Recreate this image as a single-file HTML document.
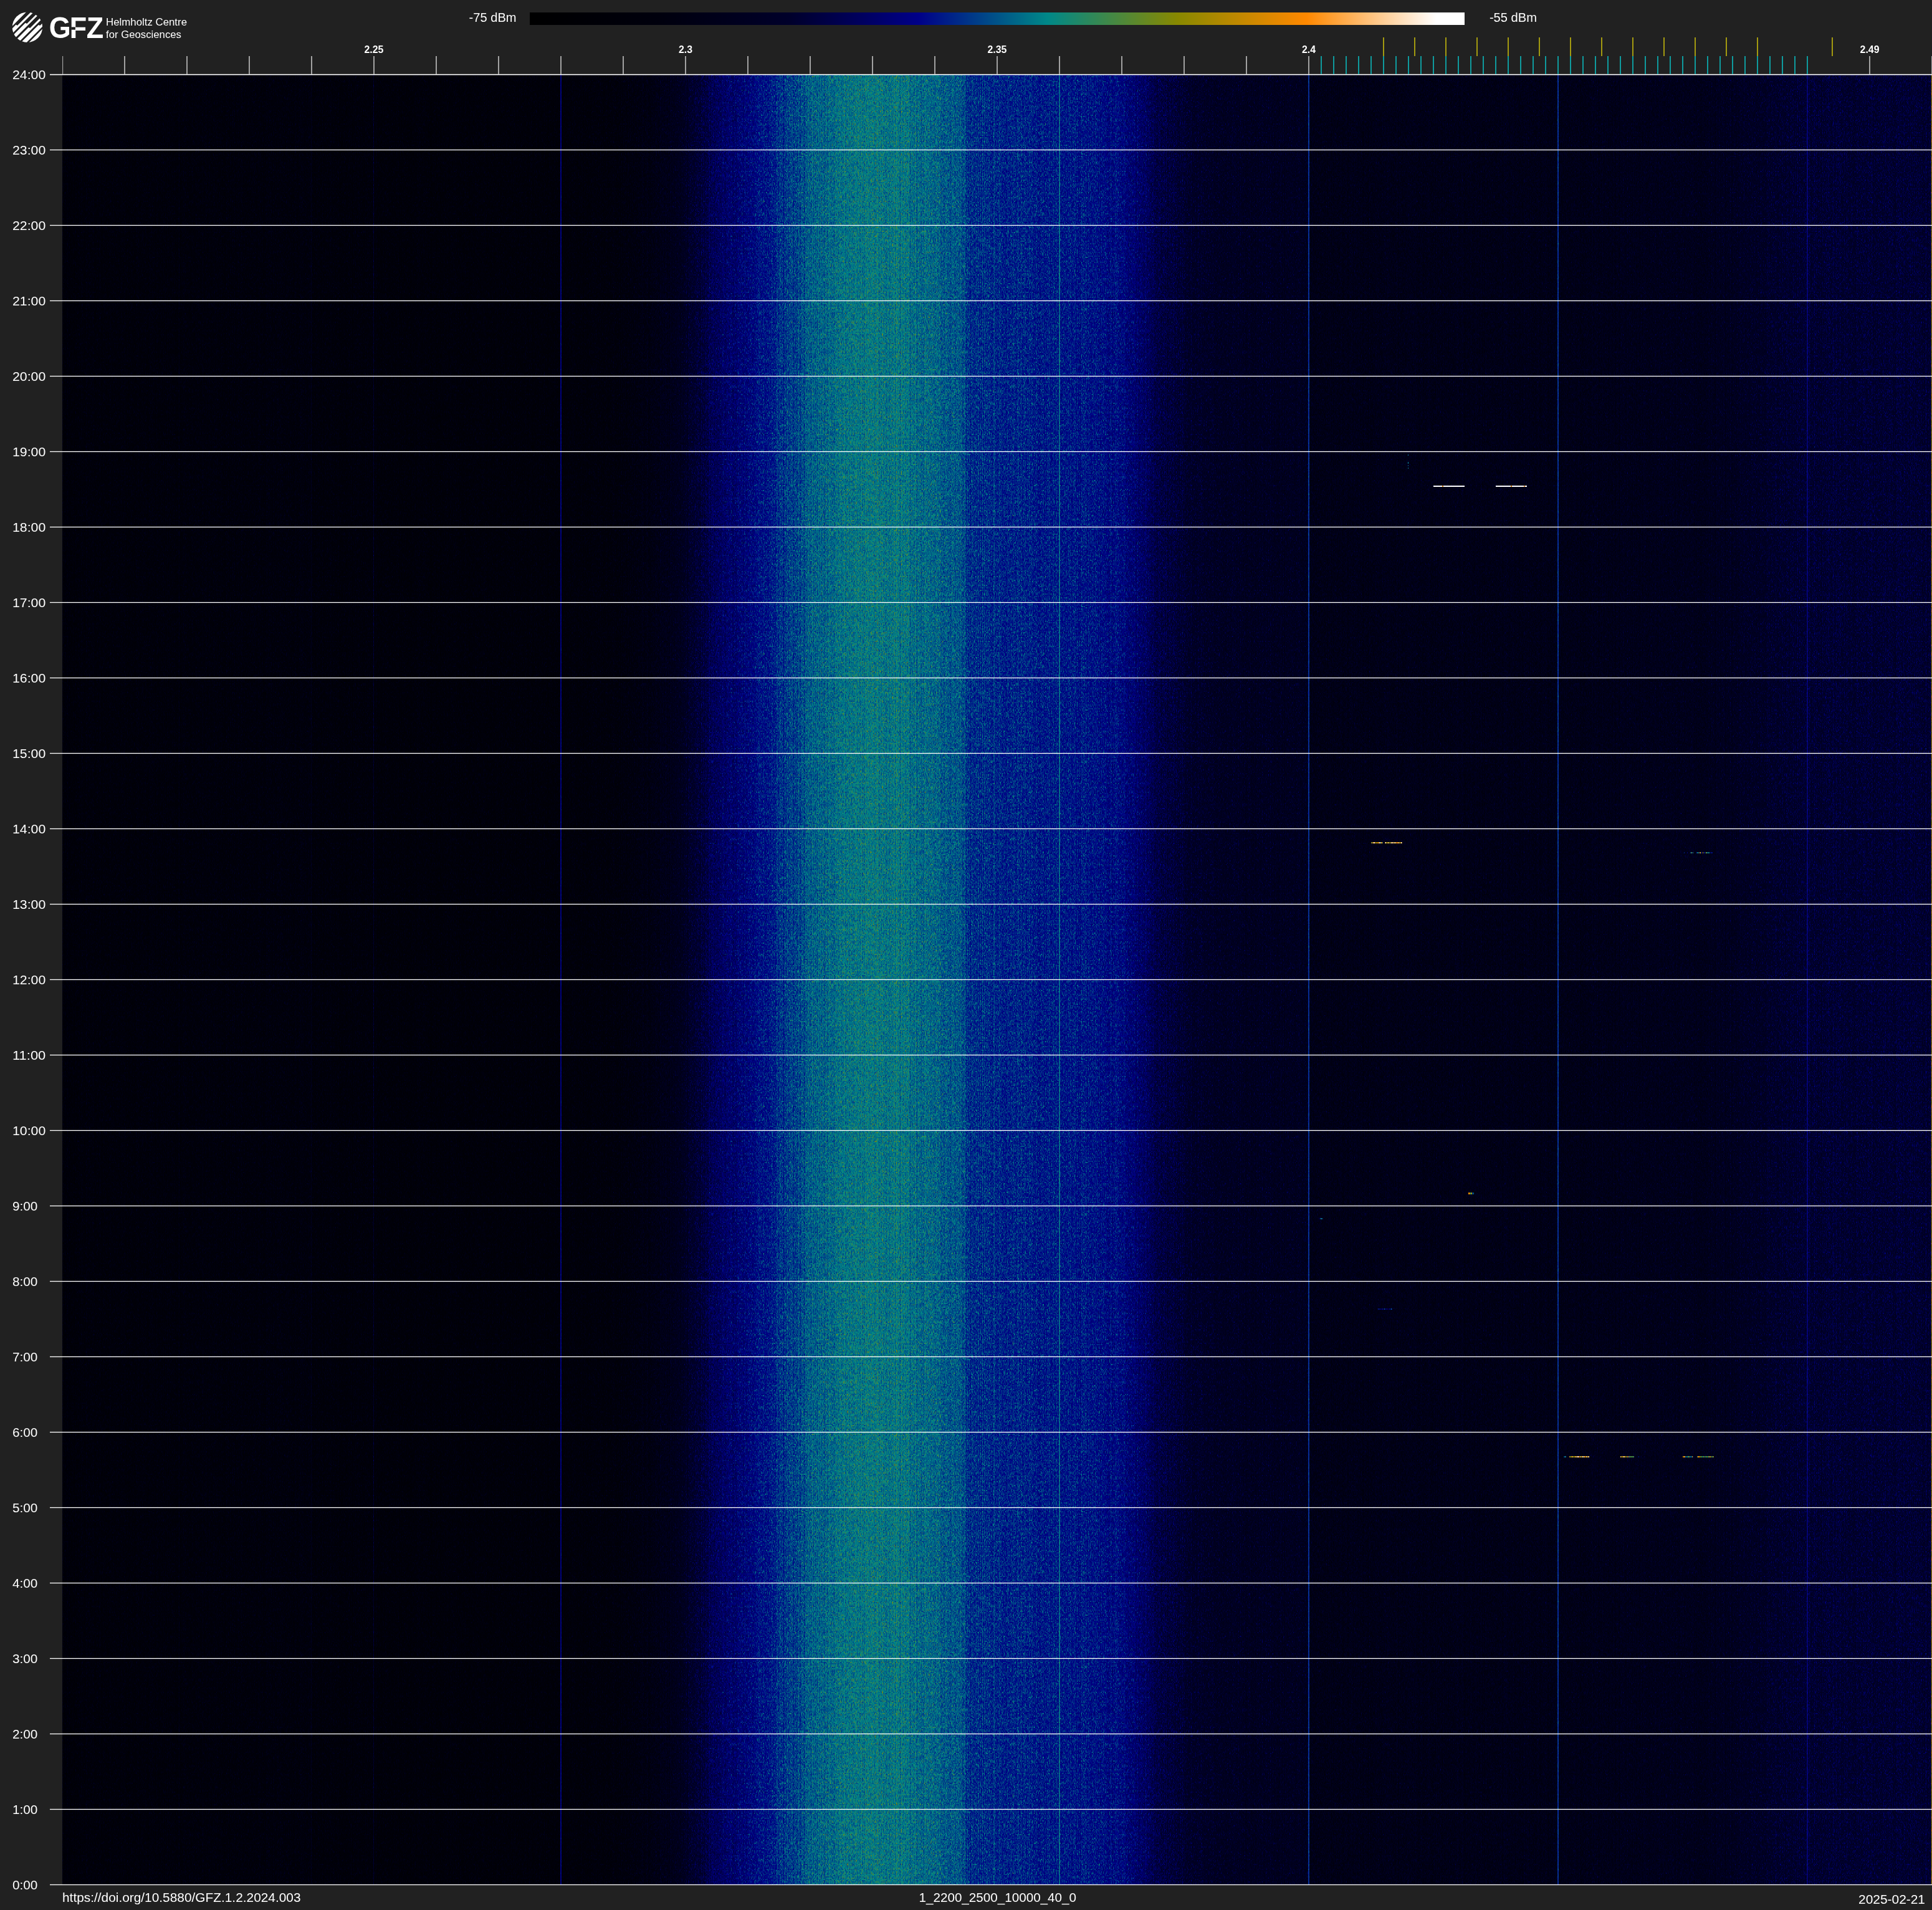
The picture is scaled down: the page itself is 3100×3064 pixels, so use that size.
<!DOCTYPE html>
<html lang="en"><head><meta charset="utf-8"><title>GFZ spectrogram 1_2200_2500_10000_40_0 2025-02-21</title>
<style>html,body{margin:0;padding:0;background:#212121;}body{width:3100px;height:3064px;overflow:hidden;}svg{display:block;will-change:transform;}text{font-family:"Liberation Sans",sans-serif;fill:#fff;}</style></head>
<body>
<svg width="3100" height="3064" viewBox="0 0 3100 3064">
<defs>
<linearGradient id="lvl" x1="0" y1="0" x2="1" y2="0"><stop offset="0.00000" stop-color="rgb(26,26,26)"/><stop offset="0.01667" stop-color="rgb(28,28,28)"/><stop offset="0.13300" stop-color="rgb(32,32,32)"/><stop offset="0.13300" stop-color="rgb(56,56,56)"/><stop offset="0.13333" stop-color="rgb(56,56,56)"/><stop offset="0.13333" stop-color="rgb(29,29,29)"/><stop offset="0.16633" stop-color="rgb(29,29,29)"/><stop offset="0.16633" stop-color="rgb(71,71,71)"/><stop offset="0.16667" stop-color="rgb(71,71,71)"/><stop offset="0.16667" stop-color="rgb(27,27,27)"/><stop offset="0.26633" stop-color="rgb(27,27,27)"/><stop offset="0.26633" stop-color="rgb(103,103,103)"/><stop offset="0.26700" stop-color="rgb(103,103,103)"/><stop offset="0.26700" stop-color="rgb(27,27,27)"/><stop offset="0.29333" stop-color="rgb(31,31,31)"/><stop offset="0.31333" stop-color="rgb(41,41,41)"/><stop offset="0.32667" stop-color="rgb(52,52,52)"/><stop offset="0.33333" stop-color="rgb(61,61,61)"/><stop offset="0.34000" stop-color="rgb(73,73,73)"/><stop offset="0.34667" stop-color="rgb(84,84,84)"/><stop offset="0.35333" stop-color="rgb(92,92,92)"/><stop offset="0.36167" stop-color="rgb(98,98,98)"/><stop offset="0.37000" stop-color="rgb(105,105,105)"/><stop offset="0.37833" stop-color="rgb(113,113,113)"/><stop offset="0.38667" stop-color="rgb(120,120,120)"/><stop offset="0.40333" stop-color="rgb(132,132,132)"/><stop offset="0.42000" stop-color="rgb(138,138,138)"/><stop offset="0.43333" stop-color="rgb(140,140,140)"/><stop offset="0.44667" stop-color="rgb(139,139,139)"/><stop offset="0.46667" stop-color="rgb(133,133,133)"/><stop offset="0.48300" stop-color="rgb(127,127,127)"/><stop offset="0.48300" stop-color="rgb(118,118,118)"/><stop offset="0.50000" stop-color="rgb(117,117,117)"/><stop offset="0.50000" stop-color="rgb(115,115,115)"/><stop offset="0.51667" stop-color="rgb(114,114,114)"/><stop offset="0.53300" stop-color="rgb(112,112,112)"/><stop offset="0.53300" stop-color="rgb(133,133,133)"/><stop offset="0.53367" stop-color="rgb(133,133,133)"/><stop offset="0.53367" stop-color="rgb(112,112,112)"/><stop offset="0.55000" stop-color="rgb(110,110,110)"/><stop offset="0.56667" stop-color="rgb(105,105,105)"/><stop offset="0.57500" stop-color="rgb(96,96,96)"/><stop offset="0.58333" stop-color="rgb(85,85,85)"/><stop offset="0.59167" stop-color="rgb(77,77,77)"/><stop offset="0.60000" stop-color="rgb(72,72,72)"/><stop offset="0.60000" stop-color="rgb(69,69,69)"/><stop offset="0.61667" stop-color="rgb(62,62,62)"/><stop offset="0.63333" stop-color="rgb(59,59,59)"/><stop offset="0.66633" stop-color="rgb(57,57,57)"/><stop offset="0.66633" stop-color="rgb(113,113,113)"/><stop offset="0.66700" stop-color="rgb(113,113,113)"/><stop offset="0.66700" stop-color="rgb(48,48,48)"/><stop offset="0.79967" stop-color="rgb(48,48,48)"/><stop offset="0.79967" stop-color="rgb(113,113,113)"/><stop offset="0.80033" stop-color="rgb(113,113,113)"/><stop offset="0.80033" stop-color="rgb(48,48,48)"/><stop offset="0.88333" stop-color="rgb(54,54,54)"/><stop offset="0.91667" stop-color="rgb(68,68,68)"/><stop offset="0.93300" stop-color="rgb(72,72,72)"/><stop offset="0.93300" stop-color="rgb(96,96,96)"/><stop offset="0.93367" stop-color="rgb(96,96,96)"/><stop offset="0.93367" stop-color="rgb(72,72,72)"/><stop offset="0.99967" stop-color="rgb(72,72,72)"/><stop offset="0.99967" stop-color="rgb(189,189,189)"/><stop offset="1.00000" stop-color="rgb(189,189,189)"/></linearGradient>
<linearGradient id="cbar" x1="0" y1="0" x2="1" y2="0"><stop offset="0.000" stop-color="#000000"/><stop offset="0.139" stop-color="#00000d"/><stop offset="0.277" stop-color="#00002a"/><stop offset="0.416" stop-color="#000088"/><stop offset="0.554" stop-color="#008888"/><stop offset="0.693" stop-color="#888800"/><stop offset="0.831" stop-color="#ff8800"/><stop offset="0.970" stop-color="#ffffff"/><stop offset="1.000" stop-color="#ffffff"/></linearGradient>
<filter id="spec" filterUnits="userSpaceOnUse" primitiveUnits="userSpaceOnUse" x="0" y="0" width="3000" height="726" color-interpolation-filters="sRGB"><feTurbulence type="fractalNoise" baseFrequency="1.71 0.855" numOctaves="1" seed="7" result="n"/><feColorMatrix in="n" type="matrix" values="0 0 0 1 0  0 0 0 1 0  0 0 0 1 0  0 0 0 0 1" result="ng"/><feFlood flood-color="#fff" x="0" y="0" width="3000" height="1" result="r1"/><feOffset in="r1" dx="0" dy="0" x="0" y="0" width="3000" height="2" result="t2"/><feTile in="t2" result="mask"/><feComposite in="ng" in2="mask" operator="in" result="even"/><feOffset in="even" dx="0" dy="1" result="odd"/><feMerge result="n2"><feMergeNode in="even"/><feMergeNode in="odd"/></feMerge><feComponentTransfer in="n2" result="nk"><feFuncR type="gamma" exponent="2.5"/><feFuncG type="gamma" exponent="2.5"/><feFuncB type="gamma" exponent="2.5"/></feComponentTransfer><feTurbulence type="fractalNoise" baseFrequency="1.37 0.00002" numOctaves="1" seed="11" x="0" y="0" width="3000" height="4" result="c0"/><feTile in="c0" result="c"/><feColorMatrix in="c" type="matrix" values="0 0 0 1 0  0 0 0 1 0  0 0 0 1 0  0 0 0 0 1" result="cg"/><feComposite in="SourceGraphic" in2="cg" operator="arithmetic" k1="0" k2="1" k3="0.1423" k4="-0.0712" result="lv"/><feComposite in="lv" in2="nk" operator="arithmetic" k1="0" k2="1" k3="0.3300" k4="-0.0636" result="s"/><feComponentTransfer in="s"><feFuncR type="table" tableValues="0.0000 0.0000 0.0000 0.0000 0.0000 0.0000 0.0000 0.0000 0.0000 0.0000 0.0000 0.0000 0.0000 0.0000 0.0000 0.0000 0.0000 0.0000 0.0000 0.0000 0.0000 0.0000 0.0000 0.0000 0.0000 0.0000 0.0000 0.0000 0.0000 0.0000 0.0000 0.0000 0.0000 0.0000 0.0000 0.0000 0.0000 0.0000 0.0000 0.0000 0.0000 0.0000 0.0000 0.0000 0.0000 0.0000 0.0000 0.0000 0.0000 0.0000 0.0000 0.0000 0.0000 0.0000 0.0000 0.0000 0.0230 0.0614 0.0998 0.1381 0.1765 0.2149 0.2532 0.2916 0.3300 0.3683 0.4067 0.4451 0.4835 0.5218 0.5570 0.5908 0.6246 0.6585 0.6923 0.7261 0.7599 0.7937 0.8275 0.8614 0.8952 0.9290 0.9628 0.9966 1.0000 1.0000 1.0000 1.0000 1.0000 1.0000 1.0000 1.0000 1.0000 1.0000 1.0000 1.0000 1.0000 1.0000 1.0000 1.0000 1.0000"/><feFuncG type="table" tableValues="0.0000 0.0000 0.0000 0.0000 0.0000 0.0000 0.0000 0.0000 0.0000 0.0000 0.0000 0.0000 0.0000 0.0000 0.0000 0.0000 0.0000 0.0000 0.0000 0.0000 0.0000 0.0000 0.0000 0.0000 0.0000 0.0000 0.0000 0.0000 0.0000 0.0000 0.0000 0.0000 0.0000 0.0000 0.0000 0.0000 0.0000 0.0000 0.0000 0.0000 0.0000 0.0000 0.0155 0.0541 0.0928 0.1314 0.1700 0.2087 0.2473 0.2860 0.3246 0.3633 0.4019 0.4406 0.4792 0.5179 0.5333 0.5333 0.5333 0.5333 0.5333 0.5333 0.5333 0.5333 0.5333 0.5333 0.5333 0.5333 0.5333 0.5333 0.5333 0.5333 0.5333 0.5333 0.5333 0.5333 0.5333 0.5333 0.5333 0.5333 0.5333 0.5333 0.5333 0.5333 0.5635 0.5971 0.6307 0.6643 0.6978 0.7314 0.7650 0.7986 0.8321 0.8657 0.8993 0.9329 0.9664 1.0000 1.0000 1.0000 1.0000"/><feFuncB type="table" tableValues="0.0000 0.0037 0.0073 0.0110 0.0147 0.0183 0.0220 0.0257 0.0293 0.0330 0.0367 0.0403 0.0440 0.0477 0.0518 0.0600 0.0683 0.0765 0.0848 0.0930 0.1013 0.1095 0.1177 0.1260 0.1342 0.1425 0.1507 0.1589 0.1727 0.1992 0.2257 0.2522 0.2787 0.3053 0.3318 0.3583 0.3848 0.4113 0.4379 0.4644 0.4909 0.5174 0.5333 0.5333 0.5333 0.5333 0.5333 0.5333 0.5333 0.5333 0.5333 0.5333 0.5333 0.5333 0.5333 0.5333 0.5103 0.4719 0.4336 0.3952 0.3568 0.3185 0.2801 0.2417 0.2034 0.1650 0.1266 0.0882 0.0499 0.0115 0.0000 0.0000 0.0000 0.0000 0.0000 0.0000 0.0000 0.0000 0.0000 0.0000 0.0000 0.0000 0.0000 0.0000 0.0647 0.1367 0.2086 0.2806 0.3525 0.4245 0.4964 0.5683 0.6403 0.7122 0.7842 0.8561 0.9281 1.0000 1.0000 1.0000 1.0000"/></feComponentTransfer></filter>
<filter id="sig" x="0" y="0" width="1" height="1" color-interpolation-filters="sRGB"><feTurbulence type="fractalNoise" baseFrequency="1.71 0.01" numOctaves="1" seed="5" result="n"/><feColorMatrix in="n" type="matrix" values="0 0 0 1 0  0 0 0 1 0  0 0 0 1 0  0 0 0 0 1" result="ng"/><feComposite in="SourceGraphic" in2="ng" operator="arithmetic" k1="0" k2="1" k3="0.9" k4="-0.45" result="s"/><feComponentTransfer in="s"><feFuncR type="table" tableValues="0.0000 0.0000 0.0000 0.0000 0.0000 0.0000 0.0000 0.0000 0.0000 0.0000 0.0000 0.0000 0.0000 0.0000 0.0000 0.0000 0.0000 0.0000 0.0000 0.0000 0.0000 0.0000 0.0000 0.0000 0.0000 0.0000 0.0000 0.0000 0.0000 0.0000 0.0000 0.0000 0.0000 0.0000 0.0000 0.0000 0.0000 0.0000 0.0000 0.0000 0.0000 0.0000 0.0000 0.0000 0.0000 0.0000 0.0000 0.0000 0.0000 0.0000 0.0000 0.0000 0.0000 0.0000 0.0000 0.0000 0.0230 0.0614 0.0998 0.1381 0.1765 0.2149 0.2532 0.2916 0.3300 0.3683 0.4067 0.4451 0.4835 0.5218 0.5570 0.5908 0.6246 0.6585 0.6923 0.7261 0.7599 0.7937 0.8275 0.8614 0.8952 0.9290 0.9628 0.9966 1.0000 1.0000 1.0000 1.0000 1.0000 1.0000 1.0000 1.0000 1.0000 1.0000 1.0000 1.0000 1.0000 1.0000 1.0000 1.0000 1.0000"/><feFuncG type="table" tableValues="0.0000 0.0000 0.0000 0.0000 0.0000 0.0000 0.0000 0.0000 0.0000 0.0000 0.0000 0.0000 0.0000 0.0000 0.0000 0.0000 0.0000 0.0000 0.0000 0.0000 0.0000 0.0000 0.0000 0.0000 0.0000 0.0000 0.0000 0.0000 0.0000 0.0000 0.0000 0.0000 0.0000 0.0000 0.0000 0.0000 0.0000 0.0000 0.0000 0.0000 0.0000 0.0000 0.0155 0.0541 0.0928 0.1314 0.1700 0.2087 0.2473 0.2860 0.3246 0.3633 0.4019 0.4406 0.4792 0.5179 0.5333 0.5333 0.5333 0.5333 0.5333 0.5333 0.5333 0.5333 0.5333 0.5333 0.5333 0.5333 0.5333 0.5333 0.5333 0.5333 0.5333 0.5333 0.5333 0.5333 0.5333 0.5333 0.5333 0.5333 0.5333 0.5333 0.5333 0.5333 0.5635 0.5971 0.6307 0.6643 0.6978 0.7314 0.7650 0.7986 0.8321 0.8657 0.8993 0.9329 0.9664 1.0000 1.0000 1.0000 1.0000"/><feFuncB type="table" tableValues="0.0000 0.0037 0.0073 0.0110 0.0147 0.0183 0.0220 0.0257 0.0293 0.0330 0.0367 0.0403 0.0440 0.0477 0.0518 0.0600 0.0683 0.0765 0.0848 0.0930 0.1013 0.1095 0.1177 0.1260 0.1342 0.1425 0.1507 0.1589 0.1727 0.1992 0.2257 0.2522 0.2787 0.3053 0.3318 0.3583 0.3848 0.4113 0.4379 0.4644 0.4909 0.5174 0.5333 0.5333 0.5333 0.5333 0.5333 0.5333 0.5333 0.5333 0.5333 0.5333 0.5333 0.5333 0.5333 0.5333 0.5103 0.4719 0.4336 0.3952 0.3568 0.3185 0.2801 0.2417 0.2034 0.1650 0.1266 0.0882 0.0499 0.0115 0.0000 0.0000 0.0000 0.0000 0.0000 0.0000 0.0000 0.0000 0.0000 0.0000 0.0000 0.0000 0.0000 0.0000 0.0647 0.1367 0.2086 0.2806 0.3525 0.4245 0.4964 0.5683 0.6403 0.7122 0.7842 0.8561 0.9281 1.0000 1.0000 1.0000 1.0000"/></feComponentTransfer></filter>
<pattern id="specpat" patternUnits="userSpaceOnUse" x="100" y="120" width="3000" height="726"><rect x="0" y="0" width="3000" height="726" fill="url(#lvl)" filter="url(#spec)"/></pattern>
<linearGradient id="lvlc" x1="0" y1="0" x2="1" y2="0"><stop offset="0.00000" stop-color="#000009"/><stop offset="0.01667" stop-color="#00000a"/><stop offset="0.13300" stop-color="#00000c"/><stop offset="0.13300" stop-color="#00001e"/><stop offset="0.13333" stop-color="#00001e"/><stop offset="0.13333" stop-color="#00000b"/><stop offset="0.16633" stop-color="#00000b"/><stop offset="0.16633" stop-color="#00002c"/><stop offset="0.16667" stop-color="#00002c"/><stop offset="0.16667" stop-color="#00000a"/><stop offset="0.26633" stop-color="#00000a"/><stop offset="0.26633" stop-color="#000081"/><stop offset="0.26700" stop-color="#000081"/><stop offset="0.26700" stop-color="#00000a"/><stop offset="0.29333" stop-color="#00000b"/><stop offset="0.31333" stop-color="#000011"/><stop offset="0.32667" stop-color="#00001b"/><stop offset="0.33333" stop-color="#000022"/><stop offset="0.34000" stop-color="#00002f"/><stop offset="0.34667" stop-color="#00004c"/><stop offset="0.35333" stop-color="#000062"/><stop offset="0.36167" stop-color="#000073"/><stop offset="0.37000" stop-color="#000085"/><stop offset="0.37833" stop-color="#001a88"/><stop offset="0.38667" stop-color="#003788"/><stop offset="0.40333" stop-color="#006588"/><stop offset="0.42000" stop-color="#007c88"/><stop offset="0.43333" stop-color="#008288"/><stop offset="0.44667" stop-color="#007e88"/><stop offset="0.46667" stop-color="#006888"/><stop offset="0.48300" stop-color="#005188"/><stop offset="0.48300" stop-color="#002c88"/><stop offset="0.50000" stop-color="#002888"/><stop offset="0.50000" stop-color="#002288"/><stop offset="0.51667" stop-color="#001e88"/><stop offset="0.53300" stop-color="#001988"/><stop offset="0.53300" stop-color="#006688"/><stop offset="0.53367" stop-color="#006688"/><stop offset="0.53367" stop-color="#001888"/><stop offset="0.55000" stop-color="#000e88"/><stop offset="0.56667" stop-color="#000085"/><stop offset="0.57500" stop-color="#00006c"/><stop offset="0.58333" stop-color="#00004f"/><stop offset="0.59167" stop-color="#00003b"/><stop offset="0.60000" stop-color="#00002d"/><stop offset="0.60000" stop-color="#000029"/><stop offset="0.61667" stop-color="#000023"/><stop offset="0.63333" stop-color="#000021"/><stop offset="0.66633" stop-color="#00001f"/><stop offset="0.66633" stop-color="#001d88"/><stop offset="0.66700" stop-color="#001d88"/><stop offset="0.66700" stop-color="#000017"/><stop offset="0.79967" stop-color="#000018"/><stop offset="0.79967" stop-color="#001d88"/><stop offset="0.80033" stop-color="#001d88"/><stop offset="0.80033" stop-color="#000018"/><stop offset="0.88333" stop-color="#00001c"/><stop offset="0.91667" stop-color="#000027"/><stop offset="0.93300" stop-color="#00002d"/><stop offset="0.93300" stop-color="#00006c"/><stop offset="0.93367" stop-color="#00006c"/><stop offset="0.93367" stop-color="#00002f"/><stop offset="0.99967" stop-color="#00002d"/><stop offset="0.99967" stop-color="#b18800"/><stop offset="1.00000" stop-color="#b18800"/></linearGradient>
<clipPath id="logoclip"><circle cx="43.9" cy="43.7" r="24.25"/></clipPath>
</defs>
<rect x="0" y="0" width="3100" height="3064" fill="#212121"/>
<rect x="100" y="120" width="3000" height="2904" fill="url(#lvlc)"/>
<rect x="100" y="120" width="3000" height="2904" fill="url(#specpat)"/>
<rect x="899" y="120" width="2" height="2904" fill="#00007c" opacity="0.7"/>
<rect x="1699" y="120" width="2" height="2904" fill="#0a6a94" opacity="0.35"/>
<rect x="2099" y="120" width="2" height="2904" fill="#0c44a0" opacity="0.55"/>
<rect x="2499" y="120" width="2" height="2904" fill="#0c44a0" opacity="0.55"/>
<rect x="2899" y="120" width="2" height="2904" fill="#08088a" opacity="0.4"/>
<g shape-rendering="crispEdges">
<rect x="2300" y="779" width="50" height="2" fill="#fff"/><rect x="2400" y="779" width="50" height="2" fill="#fff"/><rect x="2314" y="779" width="2" height="2" fill="#e08a10"/><rect x="2424" y="779" width="2" height="2" fill="#e08a10"/><rect x="2445" y="779" width="2" height="2" fill="#f0a040"/><rect x="2259" y="729" width="1" height="2" fill="#0a6a9a"/><rect x="2259" y="741" width="1" height="3" fill="#0a8a9a"/><rect x="2259" y="746" width="1" height="2" fill="#0a4a9a"/><rect x="2259" y="750" width="1" height="2" fill="#0a6a9a"/><linearGradient id="sg2200_1351" x1="0" y1="0" x2="1" y2="0"><stop offset="0" stop-color="rgb(189,189,189)"/><stop offset="1" stop-color="rgb(204,204,204)"/></linearGradient><rect x="2200" y="1351" width="19" height="2" fill="url(#sg2200_1351)" filter="url(#sig)"/><linearGradient id="sg2222_1351" x1="0" y1="0" x2="1" y2="0"><stop offset="0" stop-color="rgb(209,209,209)"/><stop offset="1" stop-color="rgb(194,194,194)"/></linearGradient><rect x="2222" y="1351" width="28" height="2" fill="url(#sg2222_1351)" filter="url(#sig)"/><linearGradient id="sg2702_1367" x1="0" y1="0" x2="1" y2="0"><stop offset="0" stop-color="rgb(117,117,117)"/><stop offset="1" stop-color="rgb(117,117,117)"/></linearGradient><rect x="2702" y="1367" width="1" height="2" fill="url(#sg2702_1367)" filter="url(#sig)"/><linearGradient id="sg2707_1367" x1="0" y1="0" x2="1" y2="0"><stop offset="0" stop-color="rgb(140,140,140)"/><stop offset="1" stop-color="rgb(140,140,140)"/></linearGradient><rect x="2707" y="1367" width="1" height="2" fill="url(#sg2707_1367)" filter="url(#sig)"/><linearGradient id="sg2712_1367" x1="0" y1="0" x2="1" y2="0"><stop offset="0" stop-color="rgb(120,120,120)"/><stop offset="1" stop-color="rgb(120,120,120)"/></linearGradient><rect x="2712" y="1367" width="5" height="2" fill="url(#sg2712_1367)" filter="url(#sig)"/><linearGradient id="sg2722_1367" x1="0" y1="0" x2="1" y2="0"><stop offset="0" stop-color="rgb(128,128,128)"/><stop offset="1" stop-color="rgb(112,112,112)"/></linearGradient><rect x="2722" y="1367" width="26" height="2" fill="url(#sg2722_1367)" filter="url(#sig)"/><rect x="2727" y="1367" width="2" height="2" fill="#c0a010"/><rect x="2732" y="1367" width="1" height="2" fill="#c0a010"/><rect x="2737" y="1367" width="1" height="2" fill="#90a020"/><linearGradient id="sg2356_1913" x1="0" y1="0" x2="1" y2="0"><stop offset="0" stop-color="rgb(204,204,204)"/><stop offset="1" stop-color="rgb(143,143,143)"/></linearGradient><rect x="2356" y="1913" width="9" height="3" fill="url(#sg2356_1913)" filter="url(#sig)"/><linearGradient id="sg2118_1954" x1="0" y1="0" x2="1" y2="0"><stop offset="0" stop-color="rgb(128,128,128)"/><stop offset="1" stop-color="rgb(128,128,128)"/></linearGradient><rect x="2118" y="1954" width="5" height="2" fill="url(#sg2118_1954)" filter="url(#sig)"/><linearGradient id="sg2210_2099" x1="0" y1="0" x2="1" y2="0"><stop offset="0" stop-color="rgb(92,92,92)"/><stop offset="1" stop-color="rgb(92,92,92)"/></linearGradient><rect x="2210" y="2099" width="24" height="2" fill="url(#sg2210_2099)" filter="url(#sig)"/><linearGradient id="sg2509_2336" x1="0" y1="0" x2="1" y2="0"><stop offset="0" stop-color="rgb(128,128,128)"/><stop offset="1" stop-color="rgb(128,128,128)"/></linearGradient><rect x="2509" y="2336" width="4" height="2" fill="url(#sg2509_2336)" filter="url(#sig)"/><linearGradient id="sg2518_2336" x1="0" y1="0" x2="1" y2="0"><stop offset="0" stop-color="rgb(184,184,184)"/><stop offset="1" stop-color="rgb(235,235,235)"/></linearGradient><rect x="2518" y="2336" width="32" height="2" fill="url(#sg2518_2336)" filter="url(#sig)"/><linearGradient id="sg2600_2336" x1="0" y1="0" x2="1" y2="0"><stop offset="0" stop-color="rgb(230,230,230)"/><stop offset="1" stop-color="rgb(138,138,138)"/></linearGradient><rect x="2600" y="2336" width="22" height="2" fill="url(#sg2600_2336)" filter="url(#sig)"/><linearGradient id="sg2629_2336" x1="0" y1="0" x2="1" y2="0"><stop offset="0" stop-color="rgb(117,117,117)"/><stop offset="1" stop-color="rgb(117,117,117)"/></linearGradient><rect x="2629" y="2336" width="1" height="2" fill="url(#sg2629_2336)" filter="url(#sig)"/><linearGradient id="sg2632_2336" x1="0" y1="0" x2="1" y2="0"><stop offset="0" stop-color="rgb(117,117,117)"/><stop offset="1" stop-color="rgb(117,117,117)"/></linearGradient><rect x="2632" y="2336" width="1" height="2" fill="url(#sg2632_2336)" filter="url(#sig)"/><linearGradient id="sg2700_2336" x1="0" y1="0" x2="1" y2="0"><stop offset="0" stop-color="rgb(173,173,173)"/><stop offset="1" stop-color="rgb(158,158,158)"/></linearGradient><rect x="2700" y="2336" width="17" height="2" fill="url(#sg2700_2336)" filter="url(#sig)"/><linearGradient id="sg2723_2336" x1="0" y1="0" x2="1" y2="0"><stop offset="0" stop-color="rgb(189,189,189)"/><stop offset="1" stop-color="rgb(138,138,138)"/></linearGradient><rect x="2723" y="2336" width="27" height="2" fill="url(#sg2723_2336)" filter="url(#sig)"/></g>
<rect x="80" y="118.85" width="3020" height="1.6" fill="#fff"/><text x="20" y="127.0" font-size="20" textLength="53.3" lengthAdjust="spacingAndGlyphs">24:00</text>
<rect x="80" y="239.85" width="3020" height="1.3" fill="#fff"/><text x="20" y="248.0" font-size="20" textLength="53.3" lengthAdjust="spacingAndGlyphs">23:00</text>
<rect x="80" y="360.85" width="3020" height="1.3" fill="#fff"/><text x="20" y="369.1" font-size="20" textLength="53.3" lengthAdjust="spacingAndGlyphs">22:00</text>
<rect x="80" y="481.85" width="3020" height="1.3" fill="#fff"/><text x="20" y="490.1" font-size="20" textLength="53.3" lengthAdjust="spacingAndGlyphs">21:00</text>
<rect x="80" y="602.85" width="3020" height="1.3" fill="#fff"/><text x="20" y="611.1" font-size="20" textLength="53.3" lengthAdjust="spacingAndGlyphs">20:00</text>
<rect x="80" y="723.85" width="3020" height="1.3" fill="#fff"/><text x="20" y="732.1" font-size="20" textLength="53.3" lengthAdjust="spacingAndGlyphs">19:00</text>
<rect x="80" y="844.85" width="3020" height="1.3" fill="#fff"/><text x="20" y="853.1" font-size="20" textLength="53.3" lengthAdjust="spacingAndGlyphs">18:00</text>
<rect x="80" y="965.85" width="3020" height="1.3" fill="#fff"/><text x="20" y="974.1" font-size="20" textLength="53.3" lengthAdjust="spacingAndGlyphs">17:00</text>
<rect x="80" y="1086.85" width="3020" height="1.3" fill="#fff"/><text x="20" y="1095.0" font-size="20" textLength="53.3" lengthAdjust="spacingAndGlyphs">16:00</text>
<rect x="80" y="1207.85" width="3020" height="1.3" fill="#fff"/><text x="20" y="1216.0" font-size="20" textLength="53.3" lengthAdjust="spacingAndGlyphs">15:00</text>
<rect x="80" y="1328.85" width="3020" height="1.3" fill="#fff"/><text x="20" y="1337.0" font-size="20" textLength="53.3" lengthAdjust="spacingAndGlyphs">14:00</text>
<rect x="80" y="1449.85" width="3020" height="1.3" fill="#fff"/><text x="20" y="1458.0" font-size="20" textLength="53.3" lengthAdjust="spacingAndGlyphs">13:00</text>
<rect x="80" y="1570.85" width="3020" height="1.3" fill="#fff"/><text x="20" y="1579.0" font-size="20" textLength="53.3" lengthAdjust="spacingAndGlyphs">12:00</text>
<rect x="80" y="1691.85" width="3020" height="1.3" fill="#fff"/><text x="20" y="1700.0" font-size="20" textLength="53.3" lengthAdjust="spacingAndGlyphs">11:00</text>
<rect x="80" y="1812.85" width="3020" height="1.3" fill="#fff"/><text x="20" y="1821.0" font-size="20" textLength="53.3" lengthAdjust="spacingAndGlyphs">10:00</text>
<rect x="80" y="1933.85" width="3020" height="1.3" fill="#fff"/><text x="20" y="1942.0" font-size="20" textLength="40.4" lengthAdjust="spacingAndGlyphs">9:00</text>
<rect x="80" y="2054.85" width="3020" height="1.3" fill="#fff"/><text x="20" y="2063.0" font-size="20" textLength="40.4" lengthAdjust="spacingAndGlyphs">8:00</text>
<rect x="80" y="2175.85" width="3020" height="1.3" fill="#fff"/><text x="20" y="2184.0" font-size="20" textLength="40.4" lengthAdjust="spacingAndGlyphs">7:00</text>
<rect x="80" y="2296.85" width="3020" height="1.3" fill="#fff"/><text x="20" y="2305.0" font-size="20" textLength="40.4" lengthAdjust="spacingAndGlyphs">6:00</text>
<rect x="80" y="2417.85" width="3020" height="1.3" fill="#fff"/><text x="20" y="2426.0" font-size="20" textLength="40.4" lengthAdjust="spacingAndGlyphs">5:00</text>
<rect x="80" y="2538.85" width="3020" height="1.3" fill="#fff"/><text x="20" y="2547.0" font-size="20" textLength="40.4" lengthAdjust="spacingAndGlyphs">4:00</text>
<rect x="80" y="2659.85" width="3020" height="1.3" fill="#fff"/><text x="20" y="2668.0" font-size="20" textLength="40.4" lengthAdjust="spacingAndGlyphs">3:00</text>
<rect x="80" y="2780.85" width="3020" height="1.3" fill="#fff"/><text x="20" y="2789.0" font-size="20" textLength="40.4" lengthAdjust="spacingAndGlyphs">2:00</text>
<rect x="80" y="2901.85" width="3020" height="1.3" fill="#fff"/><text x="20" y="2910.0" font-size="20" textLength="40.4" lengthAdjust="spacingAndGlyphs">1:00</text>
<rect x="80" y="3022.85" width="3020" height="1.3" fill="#fff"/><text x="20" y="3031.0" font-size="20" textLength="40.4" lengthAdjust="spacingAndGlyphs">0:00</text>
<rect x="100" y="90" width="1.2" height="29" fill="#a2a2a2"/><rect x="199" y="90" width="2" height="29" fill="#a2a2a2"/><rect x="299" y="90" width="2" height="29" fill="#a2a2a2"/><rect x="399" y="90" width="2" height="29" fill="#a2a2a2"/><rect x="499" y="90" width="2" height="29" fill="#a2a2a2"/><rect x="599" y="90" width="2" height="29" fill="#a2a2a2"/><rect x="699" y="90" width="2" height="29" fill="#a2a2a2"/><rect x="799" y="90" width="2" height="29" fill="#a2a2a2"/><rect x="899" y="90" width="2" height="29" fill="#a2a2a2"/><rect x="999" y="90" width="2" height="29" fill="#a2a2a2"/><rect x="1099" y="90" width="2" height="29" fill="#a2a2a2"/><rect x="1199" y="90" width="2" height="29" fill="#a2a2a2"/><rect x="1299" y="90" width="2" height="29" fill="#a2a2a2"/><rect x="1399" y="90" width="2" height="29" fill="#a2a2a2"/><rect x="1499" y="90" width="2" height="29" fill="#a2a2a2"/><rect x="1599" y="90" width="2" height="29" fill="#a2a2a2"/><rect x="1699" y="90" width="2" height="29" fill="#a2a2a2"/><rect x="1799" y="90" width="2" height="29" fill="#a2a2a2"/><rect x="1899" y="90" width="2" height="29" fill="#a2a2a2"/><rect x="1999" y="90" width="2" height="29" fill="#a2a2a2"/><rect x="2099" y="90" width="2" height="29" fill="#a2a2a2"/><rect x="2899" y="90" width="2" height="29" fill="#a2a2a2"/><rect x="2999" y="90" width="2" height="29" fill="#a2a2a2"/><rect x="3099" y="90" width="1" height="29" fill="#a2a2a2"/>
<rect x="2119" y="90" width="2" height="29" fill="#0f9b9e"/><rect x="2139" y="90" width="2" height="29" fill="#0f9b9e"/><rect x="2159" y="90" width="2" height="29" fill="#0f9b9e"/><rect x="2179" y="90" width="2" height="29" fill="#0f9b9e"/><rect x="2199" y="90" width="2" height="29" fill="#0f9b9e"/><rect x="2219" y="90" width="2" height="29" fill="#0f9b9e"/><rect x="2239" y="90" width="2" height="29" fill="#0f9b9e"/><rect x="2259" y="90" width="2" height="29" fill="#0f9b9e"/><rect x="2279" y="90" width="2" height="29" fill="#0f9b9e"/><rect x="2299" y="90" width="2" height="29" fill="#0f9b9e"/><rect x="2319" y="90" width="2" height="29" fill="#0f9b9e"/><rect x="2339" y="90" width="2" height="29" fill="#0f9b9e"/><rect x="2359" y="90" width="2" height="29" fill="#0f9b9e"/><rect x="2379" y="90" width="2" height="29" fill="#0f9b9e"/><rect x="2399" y="90" width="2" height="29" fill="#0f9b9e"/><rect x="2419" y="90" width="2" height="29" fill="#0f9b9e"/><rect x="2439" y="90" width="2" height="29" fill="#0f9b9e"/><rect x="2459" y="90" width="2" height="29" fill="#0f9b9e"/><rect x="2479" y="90" width="2" height="29" fill="#0f9b9e"/><rect x="2499" y="90" width="2" height="29" fill="#0f9b9e"/><rect x="2519" y="90" width="2" height="29" fill="#0f9b9e"/><rect x="2539" y="90" width="2" height="29" fill="#0f9b9e"/><rect x="2559" y="90" width="2" height="29" fill="#0f9b9e"/><rect x="2579" y="90" width="2" height="29" fill="#0f9b9e"/><rect x="2599" y="90" width="2" height="29" fill="#0f9b9e"/><rect x="2619" y="90" width="2" height="29" fill="#0f9b9e"/><rect x="2639" y="90" width="2" height="29" fill="#0f9b9e"/><rect x="2659" y="90" width="2" height="29" fill="#0f9b9e"/><rect x="2679" y="90" width="2" height="29" fill="#0f9b9e"/><rect x="2699" y="90" width="2" height="29" fill="#0f9b9e"/><rect x="2719" y="90" width="2" height="29" fill="#0f9b9e"/><rect x="2739" y="90" width="2" height="29" fill="#0f9b9e"/><rect x="2759" y="90" width="2" height="29" fill="#0f9b9e"/><rect x="2779" y="90" width="2" height="29" fill="#0f9b9e"/><rect x="2799" y="90" width="2" height="29" fill="#0f9b9e"/><rect x="2819" y="90" width="2" height="29" fill="#0f9b9e"/><rect x="2839" y="90" width="2" height="29" fill="#0f9b9e"/><rect x="2859" y="90" width="2" height="29" fill="#0f9b9e"/><rect x="2879" y="90" width="2" height="29" fill="#0f9b9e"/><rect x="2899" y="90" width="2" height="29" fill="#0f9b9e"/>
<rect x="2219" y="60" width="2" height="30" fill="#a39a10"/><rect x="2269" y="60" width="2" height="30" fill="#a39a10"/><rect x="2319" y="60" width="2" height="30" fill="#a39a10"/><rect x="2369" y="60" width="2" height="30" fill="#a39a10"/><rect x="2419" y="60" width="2" height="30" fill="#a39a10"/><rect x="2469" y="60" width="2" height="30" fill="#a39a10"/><rect x="2519" y="60" width="2" height="30" fill="#a39a10"/><rect x="2569" y="60" width="2" height="30" fill="#a39a10"/><rect x="2619" y="60" width="2" height="30" fill="#a39a10"/><rect x="2669" y="60" width="2" height="30" fill="#a39a10"/><rect x="2719" y="60" width="2" height="30" fill="#a39a10"/><rect x="2769" y="60" width="2" height="30" fill="#a39a10"/><rect x="2819" y="60" width="2" height="30" fill="#a39a10"/><rect x="2939" y="60" width="2" height="30" fill="#a39a10"/>
<text x="584.5" y="84.6" font-size="16.5" font-weight="bold" textLength="30.9" lengthAdjust="spacingAndGlyphs">2.25</text><text x="1089.0" y="84.6" font-size="16.5" font-weight="bold" textLength="22.1" lengthAdjust="spacingAndGlyphs">2.3</text><text x="1584.5" y="84.6" font-size="16.5" font-weight="bold" textLength="30.9" lengthAdjust="spacingAndGlyphs">2.35</text><text x="2088.9" y="84.6" font-size="16.5" font-weight="bold" textLength="22.1" lengthAdjust="spacingAndGlyphs">2.4</text><text x="2984.6" y="84.6" font-size="16.5" font-weight="bold" textLength="30.9" lengthAdjust="spacingAndGlyphs">2.49</text>
<rect x="850" y="20" width="1500" height="20" fill="url(#cbar)"/>
<text x="752.6" y="35" font-size="20" textLength="76" lengthAdjust="spacingAndGlyphs">-75 dBm</text><text x="2389.9" y="35" font-size="20" textLength="76" lengthAdjust="spacingAndGlyphs">-55 dBm</text>
<g clip-path="url(#logoclip)" fill="#fff"><polygon points="0,0 61.4,0 0,61.4"/><polygon points="0.00,65.20 25.60,39.60 27.80,41.10 68.90,0.00 73.50,0.00 0.00,73.50"/><polygon points="0.00,77.50 40.70,36.80 43.20,37.90 81.10,0.00 85.30,0.00 0.00,85.30"/><polygon points="0.00,89.70 45.70,44.00 48.20,45.10 93.30,0.00 97.70,0.00 0.00,97.70"/><polygon points="0.00,101.70 61.80,39.90 64.30,41.00 105.30,0.00 110.80,0.00 0.00,110.80"/><polygon points="114.6,0 130,0 130,130 0,130 0,114.6"/></g>
<text transform="scale(0.94,1)" x="83.7 118.9 147.6" y="61.1" font-size="47.8" font-weight="bold">GFZ</text><rect x="114.3" y="43.4" width="6.6" height="4.3" fill="#212121"/>
<text x="170" y="40.5" font-size="16.5" textLength="130" lengthAdjust="spacingAndGlyphs">Helmholtz Centre</text><text x="170" y="60.8" font-size="16.5" textLength="121" lengthAdjust="spacingAndGlyphs">for Geosciences</text>
<text x="100" y="3050.5" font-size="20" textLength="382.5" lengthAdjust="spacingAndGlyphs">https://doi.org/10.5880/GFZ.1.2.2024.003</text><text x="1474.5" y="3050.7" font-size="20" textLength="252.5" lengthAdjust="spacingAndGlyphs">1_2200_2500_10000_40_0</text><text x="2982" y="3054.4" font-size="20" textLength="107" lengthAdjust="spacingAndGlyphs">2025-02-21</text>
</svg>
</body></html>
